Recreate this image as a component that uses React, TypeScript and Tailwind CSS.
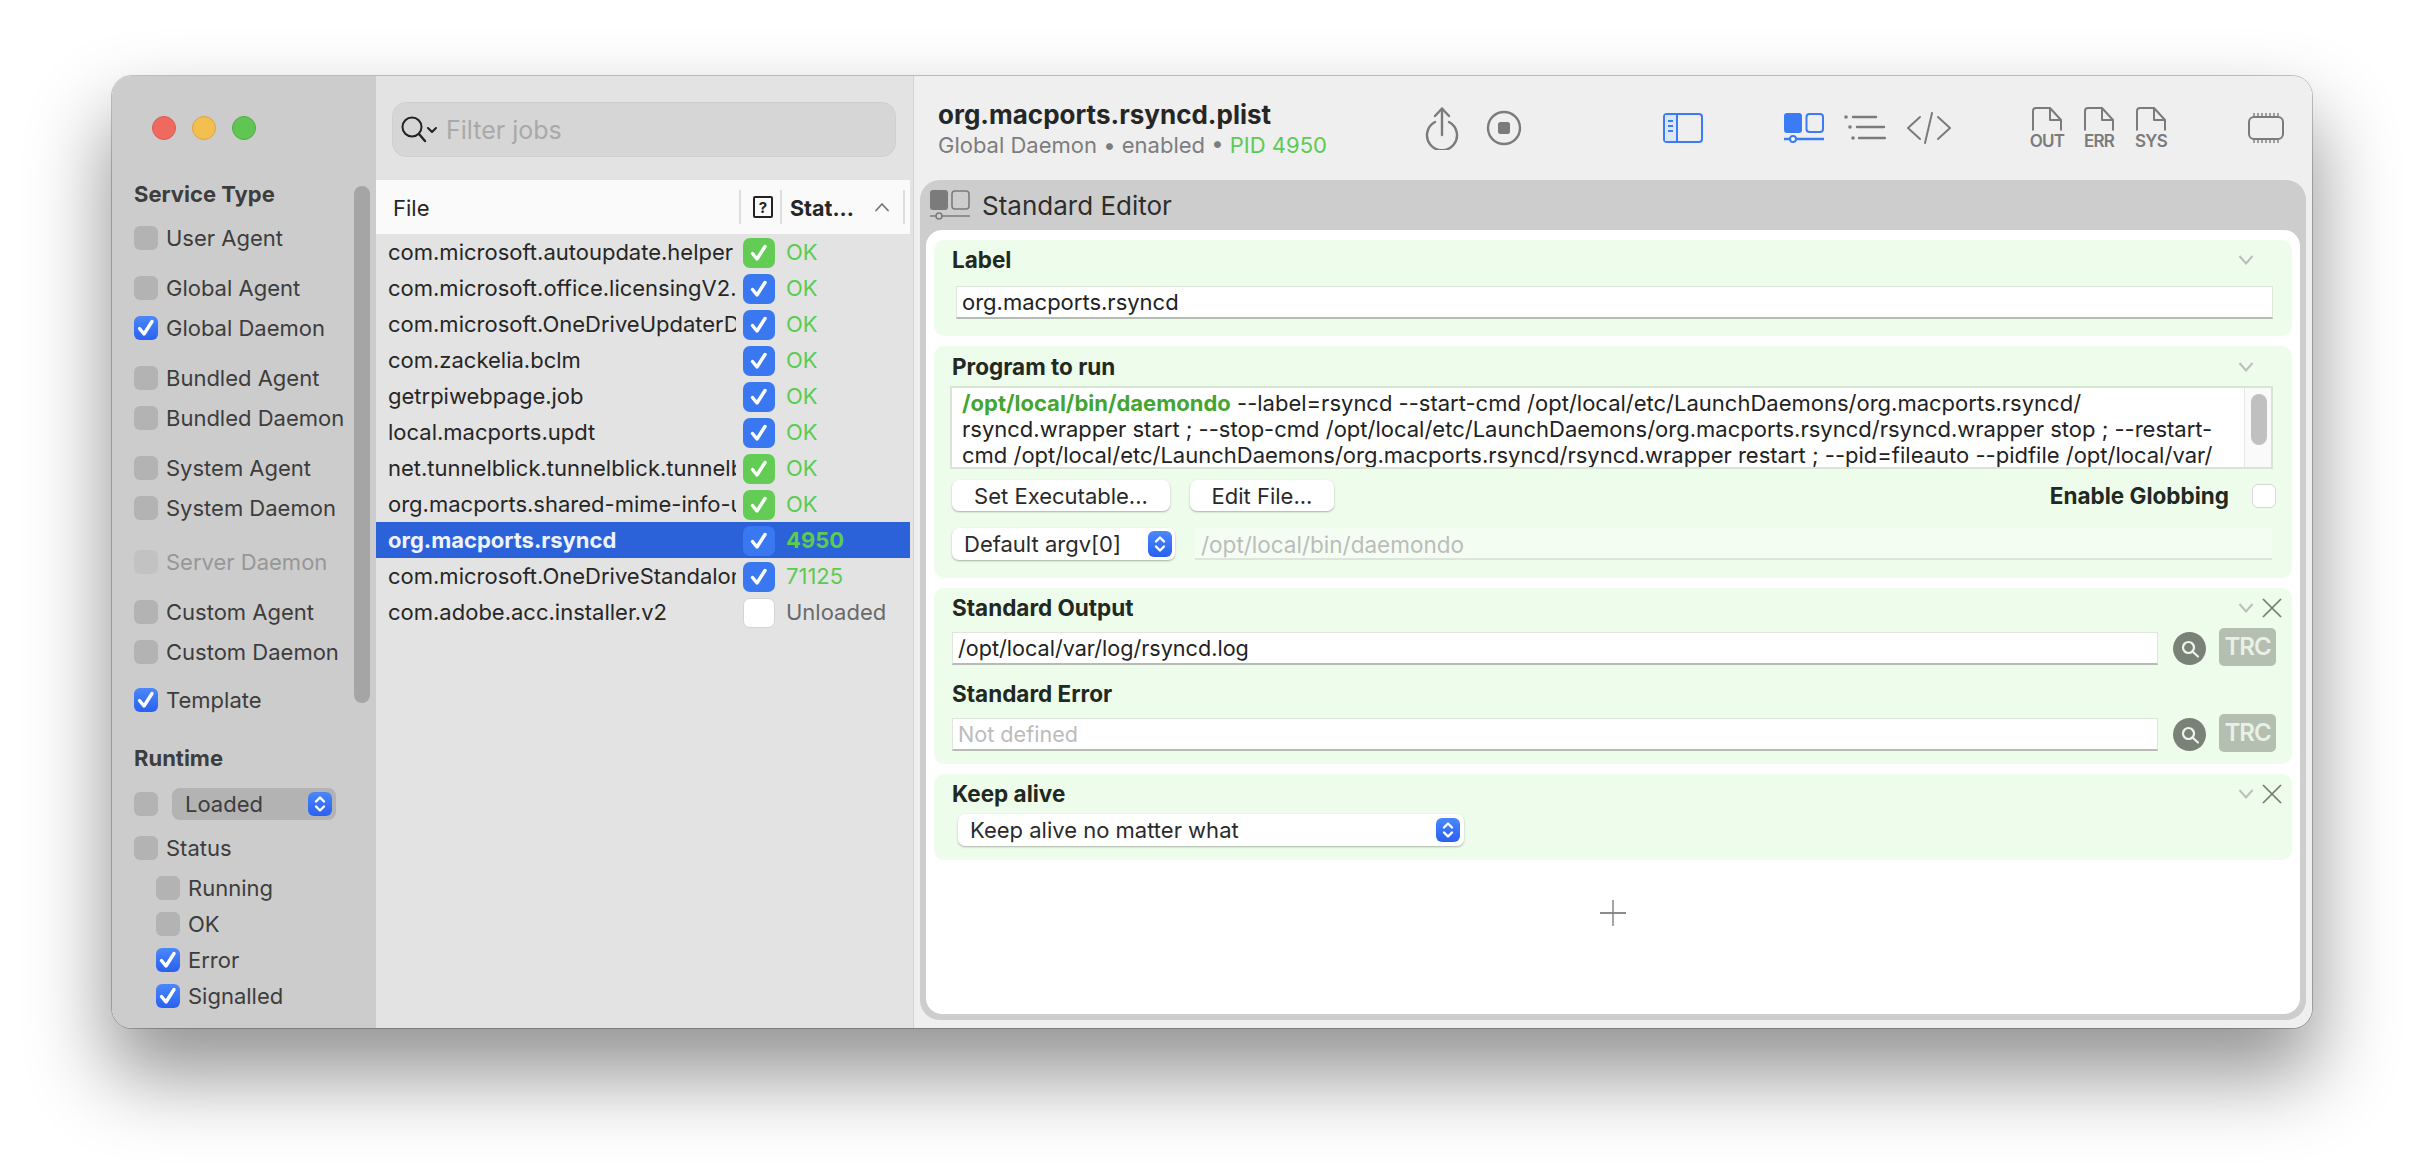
import React from 'react'

const FONT = "font-['Inter','Noto_Sans',sans-serif]"

function CheckMark({ className }: { className: string }) {
  return (
    <svg viewBox="0 0 24 24" className={className} fill="none">
      <path d="M5.5 12.5 L10 18 L18 5.5" stroke="#fff" strokeWidth="3.4" strokeLinecap="round" strokeLinejoin="round" />
    </svg>
  )
}

function SideCheck({ on, faded }: { on?: boolean; faded?: boolean }) {
  if (on) {
    return (
      <span className="flex h-6 w-6 shrink-0 items-center justify-center rounded-[6px] bg-gradient-to-b from-[#4b87fb] to-[#2a60ef]">
        <CheckMark className="h-6 w-6" />
      </span>
    )
  }
  return <span className={faded ? 'h-6 w-6 shrink-0 rounded-[6px] bg-[#c2c2c2]' : 'h-6 w-6 shrink-0 rounded-[6px] bg-[#b3b3b3]'} />
}

function SideRow({ label, on, faded, mt, sub }: { label: string; on?: boolean; faded?: boolean; mt: string; sub?: boolean }) {
  return (
    <div className={`flex h-6 items-center ${mt} ${sub ? 'ml-[22px]' : ''}`}>
      <SideCheck on={on} faded={faded} />
      <span className={faded ? 'ml-[8px] whitespace-nowrap text-[22px] text-[#979797]' : 'ml-[8px] whitespace-nowrap text-[22px] text-[#3d3d3d]'}>
        {label}
      </span>
    </div>
  )
}

function Stepper({ className }: { className: string }) {
  return (
    <span className={`flex shrink-0 items-center justify-center bg-gradient-to-b from-[#4b87fb] to-[#2a60ef] ${className}`}>
      <svg viewBox="0 0 24 24" className="h-6 w-6" fill="none" stroke="#fff" strokeWidth="2.4" strokeLinecap="round" strokeLinejoin="round">
        <path d="M8 9.5 L12 5.5 L16 9.5" />
        <path d="M8 14.5 L12 18.5 L16 14.5" />
      </svg>
    </span>
  )
}

function Sidebar() {
  return (
    <div className="relative flex h-full w-[264px] shrink-0 flex-col overflow-hidden bg-[#cccccc] pl-[22px]">
      <div className="mt-[40px] flex h-6 gap-4 pl-[18px]">
        <span className="h-6 w-6 rounded-full border border-[#dc5b50] bg-[#ee6a5f]" />
        <span className="h-6 w-6 rounded-full border border-[#d9a63f] bg-[#f5bf4f]" />
        <span className="h-6 w-6 rounded-full border border-[#4fac44] bg-[#61c554]" />
      </div>
      <div className="mt-[40px] h-7 text-[22px] leading-7 font-bold text-[#3d3d3d]">Service Type</div>
      <SideRow label="User Agent" mt="mt-[18px]" />
      <SideRow label="Global Agent" mt="mt-[26px]" />
      <SideRow label="Global Daemon" on mt="mt-[16px]" />
      <SideRow label="Bundled Agent" mt="mt-[26px]" />
      <SideRow label="Bundled Daemon" mt="mt-[16px]" />
      <SideRow label="System Agent" mt="mt-[26px]" />
      <SideRow label="System Daemon" mt="mt-[16px]" />
      <SideRow label="Server Daemon" faded mt="mt-[30px]" />
      <SideRow label="Custom Agent" mt="mt-[26px]" />
      <SideRow label="Custom Daemon" mt="mt-[16px]" />
      <SideRow label="Template" on mt="mt-[24px]" />
      <div className="mt-[32px] h-7 text-[22px] leading-7 font-bold text-[#3d3d3d]">Runtime</div>
      <div className="mt-[16px] flex h-8 items-center">
        <SideCheck />
        <div className="ml-[14px] flex h-8 w-[164px] items-center rounded-[8px] bg-[#b3b3b3] pl-[13px] pr-[4px]">
          <span className="flex-1 text-[22px] text-[#3d3d3d]">Loaded</span>
          <Stepper className="h-6 w-6 rounded-[6px]" />
        </div>
      </div>
      <SideRow label="Status" mt="mt-[16px]" />
      <SideRow label="Running" sub mt="mt-[16px]" />
      <SideRow label="OK" sub mt="mt-[12px]" />
      <SideRow label="Error" sub on mt="mt-[12px]" />
      <SideRow label="Signalled" sub on mt="mt-[12px]" />
      <div className="absolute left-[242px] top-[110px] h-[517px] w-4 rounded-full bg-[#a5a5a5]" />
    </div>
  )
}

const JOBS = [
  { name: 'com.microsoft.autoupdate.helper', box: 'green', status: 'OK' },
  { name: 'com.microsoft.office.licensingV2.helper', box: 'blue', status: 'OK' },
  { name: 'com.microsoft.OneDriveUpdaterDaemon', box: 'blue', status: 'OK' },
  { name: 'com.zackelia.bclm', box: 'blue', status: 'OK' },
  { name: 'getrpiwebpage.job', box: 'blue', status: 'OK' },
  { name: 'local.macports.updt', box: 'blue', status: 'OK' },
  { name: 'net.tunnelblick.tunnelblick.tunnelblickd', box: 'green', status: 'OK' },
  { name: 'org.macports.shared-mime-info-updater', box: 'green', status: 'OK' },
  { name: 'org.macports.rsyncd', box: 'blue', status: '4950', selected: true },
  { name: 'com.microsoft.OneDriveStandaloneUpdaterDaemon', box: 'blue', status: '71125' },
  { name: 'com.adobe.acc.installer.v2', box: 'white', status: 'Unloaded' },
]

function JobRow({ job }: { job: (typeof JOBS)[number] }) {
  const boxClass =
    job.box === 'green'
      ? 'bg-[#62cc55]'
      : job.box === 'white'
        ? 'border border-[#d4d4d4] bg-white'
        : 'bg-[#3a78f2]'
  return (
    <div className={job.selected ? 'flex h-9 w-[534px] items-center bg-[#2b62d9]' : 'flex h-9 w-[534px] items-center'}>
      <div
        className={
          job.selected
            ? 'ml-[12px] w-[348px] overflow-hidden pt-px whitespace-nowrap text-[22px] font-bold text-[#eef3fd]'
            : 'ml-[12px] w-[348px] overflow-hidden pt-px whitespace-nowrap text-[22px] text-[#262626]'
        }
      >
        {job.name}
      </div>
      <span className={`ml-[7px] mt-px flex h-[30px] w-8 shrink-0 items-center justify-center rounded-[7px] ${boxClass}`}>
        {job.box !== 'white' && <CheckMark className="h-6 w-6" />}
      </span>
      <span
        className={
          job.status === 'Unloaded'
            ? 'ml-[11px] pt-px text-[22px] text-[#6a6a6a]'
            : job.selected
              ? 'ml-[11px] pt-px text-[22px] font-bold text-[#5ccb52]'
              : 'ml-[11px] pt-px text-[22px] text-[#5ccb52]'
        }
      >
        {job.status}
      </span>
    </div>
  )
}

function JobList() {
  return (
    <div className="flex h-full w-[537px] shrink-0 flex-col bg-[#e3e3e3]">
      <div className="ml-[16px] mt-[26px] flex h-[55px] w-[504px] items-center rounded-[14px] border border-[#cfcfcf] bg-[#d6d6d6] pl-[8px]">
        <svg viewBox="0 0 36 28" className="h-7 w-9 shrink-0" fill="none" stroke="#222" strokeLinecap="round">
          <circle cx="11" cy="11" r="9.5" strokeWidth="2" />
          <path d="M18 18 L24 25" strokeWidth="2.4" />
          <path d="M27 12 L31 16 L35 12" strokeWidth="2" strokeLinejoin="round" />
        </svg>
        <span className="ml-[9px] pt-[2px] text-[25px] text-[#a9a9a9]">Filter jobs</span>
      </div>
      <div className="mt-[23px] flex h-[54px] w-[534px] items-center bg-[#fafafa]">
        <span className="ml-[17px] w-[346px] pt-[2px] text-[22px] text-[#262626]">File</span>
        <span className="h-[34px] w-0.5 bg-[#dedede]" />
        <span className="ml-[12px] flex h-[22px] w-5 items-center justify-center rounded-[2px] border-2 border-[#222] text-[15px] leading-none font-bold text-[#222]">?</span>
        <span className="ml-[7px] h-[34px] w-0.5 bg-[#dedede]" />
        <span className="ml-[8px] w-[84px] pt-[2px] text-[21.5px] font-bold whitespace-nowrap text-[#262626]">Stat...</span>
        <svg viewBox="0 0 16 10" className="h-2.5 w-4" fill="none" stroke="#777" strokeWidth="1.8" strokeLinecap="round" strokeLinejoin="round">
          <path d="M2 8.5 L8 2 L14 8.5" />
        </svg>
        <span className="ml-[13px] h-[34px] w-0.5 bg-[#dedede]" />
      </div>
      {JOBS.map((job) => (
        <JobRow key={job.name} job={job} />
      ))}
    </div>
  )
}

function DocIcon({ label, ml }: { label: string; ml: string }) {
  return (
    <div className={`flex w-[32px] flex-col items-center ${ml}`}>
      <svg viewBox="0 0 30 24" className="h-6 w-[30px]" fill="none" stroke="#7b7b7b" strokeWidth="2" strokeLinejoin="round">
        <path d="M1 23.5 V4 Q1 1 4 1 H18 L29 13 V23.5" />
        <path d="M18 1 V13 H29" />
      </svg>
      <span className="mt-[1px] text-[17px] leading-[18px] font-semibold tracking-[-0.8px] text-[#7b7b7b]">{label}</span>
    </div>
  )
}

function Toolbar() {
  return (
    <div className="flex h-[104px] shrink-0 items-center">
      <div className="ml-[24px] w-[450px] shrink-0">
        <div className="h-[34px] text-[26px] leading-[34px] font-bold whitespace-nowrap text-[#262626]">org.macports.rsyncd.plist</div>
        <div className="h-[26px] text-[22px] leading-[26px] whitespace-nowrap text-[#7d7d7d]">
          Global Daemon • enabled • <span className="text-[#5ccb52]">PID 4950</span>
        </div>
      </div>
      <svg viewBox="0 0 34 44" className="ml-[37px] h-[44px] w-[34px] shrink-0" fill="none" stroke="#7b7b7b" strokeWidth="2.4" strokeLinecap="round" strokeLinejoin="round">
        <path d="M10 16 A15 15 0 1 0 24 16" />
        <path d="M17 29 V3" />
        <path d="M10 10 L17 2.5 L24 10" />
      </svg>
      <svg viewBox="0 0 36 36" className="ml-[27px] h-9 w-9 shrink-0">
        <circle cx="18" cy="18" r="16" fill="none" stroke="#7b7b7b" strokeWidth="2.4" />
        <rect x="12" y="12" width="12" height="12" rx="2.5" fill="#7b7b7b" />
      </svg>
      <svg viewBox="0 0 40 30" className="ml-[141px] h-[30px] w-[40px] shrink-0" fill="none" stroke="#3b7bf6" strokeWidth="2">
        <rect x="1" y="1" width="38" height="28" rx="3" />
        <rect x="2" y="2" width="12" height="26" fill="#dbe6fb" stroke="none" />
        <path d="M14 1 V29" />
        <path d="M5 8 H10 M5 13 H10 M5 18 H10" />
      </svg>
      <svg viewBox="0 0 40 30" className="ml-[81px] h-[30px] w-[40px] shrink-0">
        <rect x="0" y="0" width="18" height="20" rx="3" fill="#3b7bf6" />
        <rect x="22.5" y="1" width="16.5" height="18" rx="3" fill="none" stroke="#3b7bf6" strokeWidth="2" />
        <path d="M0 26 H40" stroke="#3b7bf6" strokeWidth="2.4" />
        <circle cx="9" cy="26" r="3" fill="#fff" stroke="#3b7bf6" strokeWidth="2" />
      </svg>
      <svg viewBox="0 0 42 26" className="ml-[20px] h-[26px] w-[42px] shrink-0" stroke="#7b7b7b" strokeWidth="2.4" strokeLinecap="round">
        <path d="M9 2 H32 M13 12 H40 M15 23 H41" />
        <circle cx="2" cy="2" r="1.8" fill="#7b7b7b" stroke="none" />
        <circle cx="6" cy="12" r="1.8" fill="#7b7b7b" stroke="none" />
        <circle cx="9" cy="23" r="1.8" fill="#7b7b7b" stroke="none" />
      </svg>
      <svg viewBox="0 0 46 32" className="ml-[20px] h-8 w-[46px] shrink-0" fill="none" stroke="#7b7b7b" strokeWidth="2" strokeLinecap="round" strokeLinejoin="round">
        <path d="M14 5 L2 16 L14 27" />
        <path d="M32 5 L44 16 L32 27" />
        <path d="M26 1 L19 31" />
      </svg>
      <DocIcon label="OUT" ml="ml-[79px]" />
      <DocIcon label="ERR" ml="ml-[20px]" />
      <DocIcon label="SYS" ml="ml-[20px]" />
      <svg viewBox="0 0 36 30" className="ml-[81px] h-[30px] w-9 shrink-0" fill="none" stroke="#7b7b7b" strokeWidth="2">
        <rect x="1" y="4" width="34" height="22" rx="5" />
        <path strokeWidth="1.4" d="M6 0 V3 M10 0 V3 M14 0 V3 M18 0 V3 M22 0 V3 M26 0 V3 M30 0 V3 M6 27 V30 M10 27 V30 M14 27 V30 M18 27 V30 M22 27 V30 M26 27 V30 M30 27 V30" />
      </svg>
    </div>
  )
}

function Chevron() {
  return (
    <svg viewBox="0 0 16 10" className="h-2.5 w-4 shrink-0" fill="none" stroke="#bdbdbd" strokeWidth="2">
      <path d="M1.5 1 L8 8.5 L14.5 1" />
    </svg>
  )
}

function CloseX() {
  return (
    <svg viewBox="0 0 20 20" className="h-5 w-5 shrink-0" fill="none" stroke="#757b73" strokeWidth="1.7">
      <path d="M1 1 L19 19 M19 1 L1 19" />
    </svg>
  )
}

function SectionHead({ title, closable, pt }: { title: string; closable?: boolean; pt: string }) {
  return (
    <div className={`flex items-center pl-[18px] pr-[10px] ${pt}`}>
      <div className="h-6 flex-1 text-[22.5px] leading-6 font-bold text-[#222822]">{title}</div>
      <Chevron />
      <span className="ml-[8px] flex h-5 w-5 items-center justify-center">{closable && <CloseX />}</span>
    </div>
  )
}

function TextField({ value, placeholder }: { value?: string; placeholder?: string }) {
  return (
    <div className="mt-[4px] flex h-[33px] w-[1206px] items-center border border-b-2 border-[#dfe6dc] border-b-[#b5bdb2] bg-white pl-[5px] text-[21.6px] whitespace-nowrap">
      {value ? <span className="text-[#222]">{value}</span> : <span className="text-[#bcbcbc]">{placeholder}</span>}
    </div>
  )
}

function TraceRow({ value, placeholder, mt }: { value?: string; placeholder?: string; mt: string }) {
  return (
    <div className={`flex h-[38px] items-start pl-[18px] ${mt}`}>
      <TextField value={value} placeholder={placeholder} />
      <span className="ml-[15px] mt-[4px] flex h-[33px] w-[33px] shrink-0 items-center justify-center rounded-full bg-[#7a8277]">
        <svg viewBox="0 0 20 20" className="h-5 w-5" fill="none" stroke="#eef3ec" strokeWidth="2.2" strokeLinecap="round">
          <circle cx="8.5" cy="8.5" r="5.5" />
          <path d="M13 13 L18 17.5" />
        </svg>
      </span>
      <span className="ml-[13px] flex h-[38px] w-[57px] shrink-0 items-center justify-center rounded-[5px] bg-[#b4beb1] text-[24px] font-semibold tracking-[-1px] text-[#e8f1e5]">TRC</span>
    </div>
  )
}

function Editor() {
  return (
    <div className="mx-[6px] mb-2 flex min-h-0 flex-1 flex-col rounded-[20px] bg-[#cdcdcd] px-[6px] pb-[6px]">
      <div className="flex h-[50px] shrink-0 items-center">
        <svg viewBox="0 0 40 30" className="ml-[4px] h-[30px] w-[40px] shrink-0">
          <rect x="0" y="0" width="18" height="20" rx="3" fill="#7b7b7b" />
          <rect x="22" y="1" width="17" height="18" rx="3" fill="none" stroke="#7b7b7b" strokeWidth="1.6" />
          <path d="M0 26 H40" stroke="#7b7b7b" strokeWidth="1.6" />
          <circle cx="9" cy="26" r="3" fill="#cdcdcd" stroke="#7b7b7b" strokeWidth="1.6" />
        </svg>
        <span className="ml-[12px] text-[26px] text-[#2e2e2e]">Standard Editor</span>
      </div>
      <div className="flex min-h-0 flex-1 flex-col gap-[10px] rounded-[16px] bg-white px-[8px] pt-[10px]">
        <section className="h-[96px] rounded-[10px] bg-[#eefdeb]">
          <SectionHead title="Label" pt="pt-[8px]" />
          <div className="ml-[22px] mt-[14px] flex h-[33px] w-[1317px] items-center border border-b-2 border-[#dfe6dc] border-b-[#b5bdb2] bg-white pl-[5px] text-[22px] text-[#222]">
            org.macports.rsyncd
          </div>
        </section>

        <section className="h-[232px] rounded-[10px] bg-[#eefdeb]">
          <SectionHead title="Program to run" pt="pt-[9px]" />
          <div className="ml-[16px] mt-[7px] flex h-[83px] w-[1323px] border-2 border-[#d7e6d3] bg-white">
            <div className="flex-1 overflow-hidden pl-[10px] text-[22px] leading-[26px] whitespace-nowrap text-[#222]">
              <div className="h-[26px] pt-[2px]">
                <span className="font-bold text-[#44a532]">/opt/local/bin/daemondo</span> --label=rsyncd --start-cmd /opt/local/etc/LaunchDaemons/org.macports.rsyncd/
              </div>
              <div className="h-[26px] pt-[2px]">rsyncd.wrapper start ; --stop-cmd /opt/local/etc/LaunchDaemons/org.macports.rsyncd/rsyncd.wrapper stop ; --restart-</div>
              <div className="h-[26px] pt-[2px]">cmd /opt/local/etc/LaunchDaemons/org.macports.rsyncd/rsyncd.wrapper restart ; --pid=fileauto --pidfile /opt/local/var/</div>
            </div>
            <div className="w-[27px] shrink-0 border-l border-[#e8e8e8] bg-[#fafafa] pl-[6px] pt-[6px]">
              <div className="h-[51px] w-4 rounded-full bg-[#c0c0c0]" />
            </div>
          </div>
          <div className="mt-[11px] flex h-[31px] items-center pl-[18px] pr-[16px]">
            <button className="h-[31px] w-[218px] rounded-[7px] bg-white text-[22px] text-[#2a2a2a] shadow-[0_1px_2px_rgba(0,0,0,0.3)]">Set Executable...</button>
            <button className="ml-[20px] h-[31px] w-[144px] rounded-[7px] bg-white text-[22px] text-[#2a2a2a] shadow-[0_1px_2px_rgba(0,0,0,0.3)]">Edit File...</button>
            <span className="ml-auto text-[22.5px] font-bold text-[#222822]">Enable Globbing</span>
            <span className="ml-[23px] h-6 w-6 rounded-[6px] border border-[#d5d9d3] bg-white" />
          </div>
          <div className="mt-[17px] flex h-8 items-center pl-[18px]">
            <div className="flex h-8 w-[223px] items-center rounded-[7px] bg-white pl-[12px] pr-[3px] shadow-[0_1px_2px_rgba(0,0,0,0.3)]">
              <span className="flex-1 text-[22px] whitespace-nowrap text-[#2a2a2a]">Default argv[0]</span>
              <Stepper className="h-[26px] w-6 rounded-[6px]" />
            </div>
            <div className="ml-[20px] flex h-8 w-[1077px] items-center border-b-2 border-[#dde5da] bg-[#f4fdf2] pl-[6px] pt-[3px] text-[22.5px] text-[#bcbcbc]">/opt/local/bin/daemondo</div>
          </div>
        </section>

        <section className="h-[176px] rounded-[10px] bg-[#eefdeb]">
          <SectionHead title="Standard Output" closable pt="pt-[8px]" />
          <TraceRow value="/opt/local/var/log/rsyncd.log" mt="mt-[8px]" />
          <div className="mt-[16px] h-6 pl-[18px] text-[22.5px] leading-6 font-bold text-[#222822]">Standard Error</div>
          <TraceRow placeholder="Not defined" mt="mt-[8px]" />
        </section>

        <section className="h-[86px] rounded-[10px] bg-[#eefdeb]">
          <SectionHead title="Keep alive" closable pt="pt-[8px]" />
          <div className="ml-[24px] mt-[8px] flex h-8 w-[506px] items-center rounded-[7px] bg-white pl-[12px] pr-[4px] shadow-[0_1px_2px_rgba(0,0,0,0.3)]">
            <span className="flex-1 text-[22px] text-[#2a2a2a]">Keep alive no matter what</span>
            <Stepper className="h-6 w-6 rounded-[6px]" />
          </div>
        </section>

        <div className="mt-[29px] flex justify-center">
          <svg viewBox="0 0 28 28" className="h-7 w-7" fill="none" stroke="#7f7f7f">
            <path d="M14 1 V27" strokeWidth="1.4" />
            <path d="M1 14 H27" strokeWidth="1.8" />
          </svg>
        </div>
      </div>
    </div>
  )
}

export default function App() {
  return (
    <div className={`h-[1176px] w-[2424px] overflow-hidden bg-white pl-[112px] pt-[76px] ${FONT}`}>
      <div className="flex h-[952px] w-[2200px] overflow-hidden rounded-[20px] shadow-[0_0_0_1px_rgba(0,0,0,0.22),0_44px_80px_4px_rgba(0,0,0,0.42)]">
        <Sidebar />
        <JobList />
        <div className="flex h-full min-w-0 flex-1 flex-col border-l border-[#d4d4d4] bg-[#efefef]">
          <Toolbar />
          <Editor />
        </div>
      </div>
    </div>
  )
}
